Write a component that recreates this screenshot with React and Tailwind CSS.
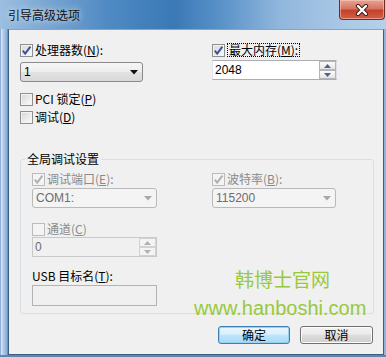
import React from "react";

const Check = ({ checked, disabled }) => (
  <span
    className={`flex h-[13px] w-[13px] shrink-0 items-center justify-center border ${
      disabled
        ? "border-[#bcbcbc] bg-[#f4f4f4]"
        : "border-[#8e8f8f] bg-[linear-gradient(135deg,#d6d6d6,#fdfdfd)] shadow-[inset_0_0_0_1px_#f4f4f4]"
    }`}
  >
    {checked && (
      <svg width="11" height="11" viewBox="0 0 11 11">
        <path
          d="M1.8 5.6 L4.2 8.6 L9.4 1.6"
          fill="none"
          stroke={disabled ? "#b0b0b0" : "#3b54a0"}
          strokeWidth="2"
        />
      </svg>
    )}
  </span>
);

const Row = ({ checked, disabled, children }) => (
  <div className="flex h-[14px] items-center gap-[2px]">
    <Check checked={checked} disabled={disabled} />
    <span className={disabled ? "text-[#8a8a8a]" : "text-black"}>{children}</span>
  </div>
);

const Arrow = ({ color }) => (
  <svg width="8" height="5" viewBox="0 0 8 5">
    <path d="M0 0 H8 L4 4.5 Z" fill={color} />
  </svg>
);

const Combo = ({ value, disabled, width }) => (
  <div
    className={`flex h-[20px] items-center justify-between rounded-[3px] border pl-[3px] pr-[4px] font-['Liberation_Sans',sans-serif] ${width} ${
      disabled
        ? "border-[#b9b9b9] bg-[#f4f4f4] text-[#6d6d6d]"
        : "border-[#8a8a8a] bg-[linear-gradient(#f6f6f6,#ededed_50%,#e2e2e2_51%,#d8d8d8)] text-black"
    }`}
  >
    <span>{value}</span>
    <Arrow color={disabled ? "#a8a8a8" : "#111"} />
  </div>
);

const SpinBtn = ({ up, disabled }) => (
  <div
    className={`flex flex-1 items-center justify-center border ${
      disabled ? "border-[#d2d2d2] bg-[#f4f4f4]" : "border-[#b5b5b5] bg-[linear-gradient(#fafafa,#e6e6e6)]"
    }`}
  >
    <svg width="7" height="4" viewBox="0 0 7 4">
      <path d={up ? "M0 4 H7 L3.5 0 Z" : "M0 0 H7 L3.5 4 Z"} fill={disabled ? "#b0b0b0" : "#4c6390"} />
    </svg>
  </div>
);

const Spin = ({ value, disabled }) => (
  <div
    className={`flex h-[20px] w-[125px] border font-['Liberation_Sans',sans-serif] ${
      disabled
        ? "border-[#c9c9c9] bg-[#f0f0f0] text-[#6d6d6d]"
        : "border-[#abadb3] border-l-[#e2e3ea] border-r-[#dbdfe6] bg-white text-black"
    }`}
  >
    <div className="flex flex-1 items-center pl-[2px]">{value}</div>
    <div className="flex w-[17px] flex-col">
      <SpinBtn up disabled={disabled} />
      <SpinBtn disabled={disabled} />
    </div>
  </div>
);

export default function App() {
  return (
    <div className="flex h-[357px] w-[386px] flex-col overflow-hidden bg-[linear-gradient(to_right,#9dbfe0,#7aa6d2_12%,#4f8ac3_28%,#3a79b6_45%,#5c93c9_58%,#8fb6dc_72%,#a9c7e5_88%,#b6d0ea)] font-['Noto_Sans_CJK_SC','Noto_Sans',sans-serif] text-[12px] leading-[14px]">
      {/* Title bar */}
      <div className="flex h-[29px] items-start justify-between">
        <div className="pl-[8px] pt-[8px] text-[#111] [text-shadow:0_0_6px_rgba(255,255,255,0.9)]">
          引导高级选项
        </div>
        <div className="mr-[1px] flex h-[20px] w-[46px] items-center justify-center rounded-b-[4px] border border-t-0 border-[#6e2e25] bg-[linear-gradient(#e8a493,#d47561_45%,#c4412a_55%,#d2604a)] shadow-[inset_0_0_0_1px_rgba(255,210,200,0.5)]">
          <svg width="14" height="12" viewBox="0 0 14 12">
            <path d="M3 2 L11 10 M11 2 L3 10" stroke="#3d1a14" strokeWidth="4.2" strokeLinecap="round" />
            <path d="M3 2 L11 10 M11 2 L3 10" stroke="#fff" strokeWidth="2.4" strokeLinecap="round" />
          </svg>
        </div>
      </div>

      <div className="flex flex-1">
        {/* Left frame */}
        <div className="w-[8px] bg-[linear-gradient(to_right,#7099c4,#d6e6f5_20%,#a9c8e6_45%,#8fb4da_80%,#5f86b2)]" />

        {/* Client area */}
        <div className="relative flex w-[376px] flex-col border border-[#3f5d80] border-t-[#8aa4c0] bg-[#f0f0f0] pl-[11px] pt-[13px]">
          <div className="flex">
            <div className="flex w-[192px] flex-col">
              <Row checked>
                处理器数(<u>N</u>):
              </Row>
              <div className="mt-[5px]">
                <Combo value="1" width="w-[123px]" />
              </div>
              <div className="mt-[10px]">
                <Row>
                  PCI 锁定(<u>P</u>)
                </Row>
              </div>
              <div className="mt-[4px]">
                <Row>
                  调试(<u>D</u>)
                </Row>
              </div>
            </div>
            <div className="flex flex-col">
              <div className="flex h-[14px] items-center gap-[2px]">
                <Check checked />
                <span className="border border-dotted border-black px-[1px] leading-[12px]">
                  最大内存(<u>M</u>):
                </span>
              </div>
              <div className="mt-[3px]">
                <Spin value="2048" />
              </div>
            </div>
          </div>

          <fieldset className="mt-[28px] w-[354px] rounded-[3px] border border-[#d5dfe5] p-0">
            <legend className="ml-[4px] px-[2px] leading-[14px] text-black">全局调试设置</legend>
            <div className="flex px-[11px] pb-[7px] pt-[6px]">
              <div className="flex w-[180px] flex-col">
                <Row checked disabled>
                  调试端口(<u>E</u>):
                </Row>
                <div className="mt-[2px]">
                  <Combo value="COM1:" disabled width="w-[125px]" />
                </div>
                <div className="mt-[14px]">
                  <Row disabled>
                    通道(<u>C</u>)
                  </Row>
                </div>
                <div className="mt-[1px]">
                  <Spin value="0" disabled />
                </div>
                <div className="mt-[12px] h-[14px] text-black">
                  USB 目标名(<u>T</u>):
                </div>
                <div className="mt-[2px] h-[21px] w-[125px] border border-[#b3b3b3] bg-[#f0f0f0]" />
              </div>
              <div className="flex flex-col">
                <Row checked disabled>
                  波特率(<u>B</u>):
                </Row>
                <div className="mt-[2px]">
                  <Combo value="115200" disabled width="w-[124px]" />
                </div>
              </div>
            </div>
          </fieldset>

          <div className="mt-[12px] flex justify-end gap-[10px] pr-[10px]">
            <button className="flex h-[18px] w-[72px] items-center justify-center rounded-[3px] border border-[#3c7fb1] bg-[linear-gradient(#eaf6fd,#d9f0fc_45%,#bee6fd_50%,#a7d9f5)] text-black shadow-[inset_0_0_0_1px_#98d1ef]">
              确定
            </button>
            <button className="flex h-[18px] w-[73px] items-center justify-center rounded-[3px] border border-[#707070] bg-[linear-gradient(#f2f2f2,#ebebeb_45%,#dddddd_50%,#cfcfcf)] text-black shadow-[inset_0_0_0_1px_#fcfcfc]">
              取消
            </button>
          </div>

          {/* Watermark */}
          <div className="pointer-events-none absolute left-[226px] top-[239px] text-[19px] leading-[20px] text-[#98c93c]">
            韩博士官网
          </div>
          <div className="pointer-events-none absolute left-[185px] top-[268px] font-['Liberation_Sans',sans-serif] text-[20px] leading-[20px] text-[#98c93c]">
            www.hanboshi.com
          </div>
        </div>

        {/* Right frame */}
        <div className="w-[2px] bg-[#8fb4da]" />
      </div>
      <div className="h-[2px] bg-[#5f86b2]" />
    </div>
  );
}
